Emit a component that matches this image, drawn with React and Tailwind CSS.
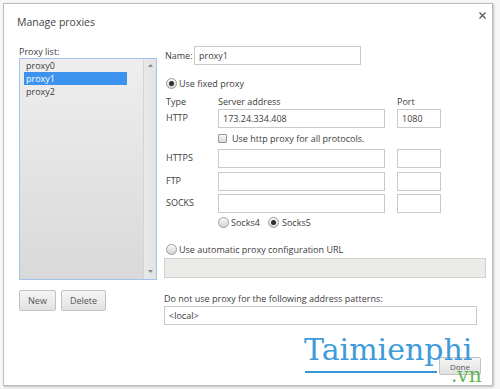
import React from "react";

function Radio({ checked }) {
  return (
    <span className="w-[11px] h-[11px] rounded-full border border-[#9c9c9c] bg-[linear-gradient(to_bottom,#fafafa,#d4d4d4)] flex items-center justify-center shrink-0">
      {checked && <span className="w-[5px] h-[5px] rounded-full bg-[#2e2e2e]" />}
    </span>
  );
}

function Input({ className = "", children, disabled }) {
  return (
    <div
      className={
        "border flex items-center pl-[4px] shrink-0 " +
        (disabled ? "bg-[#ebebe7] border-[#d2d2d2] " : "bg-white border-[#c9c9c9] ") +
        className
      }
    >
      {children}
    </div>
  );
}

function Btn({ className = "", children }) {
  return (
    <div
      className={
        "flex items-center justify-center border border-[#c2c2c2] rounded-[2px] bg-[linear-gradient(to_bottom,#f5f5f5,#e2e2e2)] text-[#555] " +
        className
      }
    >
      {children}
    </div>
  );
}

function Row({ label, children, mt }) {
  return (
    <div className={"flex items-center h-[19px] " + mt}>
      <div className="w-[54px] pl-[2px] mb-[3px]">{label}</div>
      {children}
    </div>
  );
}

export default function App() {
  return (
    <div className="w-[500px] h-[389px] bg-[#f6f6f6] pt-[3px] pl-[3px] font-['Open_Sans',sans-serif] text-[9px] leading-[13px] text-[#3d3d3d]">
      <div className="relative w-[490px] h-[383px] bg-white border border-[#bcbcbc] shadow-[1px_1px_2px_rgba(0,0,0,0.22)] flex flex-col">
        {/* header */}
        <div className="h-[37px] flex justify-between shrink-0">
          <div className="pl-[13px] pt-[11px] text-[10.5px] leading-[14px] text-[#444]">
            Manage proxies
          </div>
          <div className="pt-[8px] pr-[6px]">
            <svg width="7" height="7" viewBox="0 0 7 7">
              <path d="M0.5 0.5 L6.5 6.5 M6.5 0.5 L0.5 6.5" stroke="#5a5a5a" strokeWidth="1.4" />
            </svg>
          </div>
        </div>

        {/* body */}
        <div className="flex pl-[15px]">
          {/* left column */}
          <div className="w-[138px] shrink-0">
            <div className="mt-[4px] h-[13px] leading-[13px]">Proxy list:</div>
            <div className="h-[222px] border border-[#a3c4e8] bg-[linear-gradient(to_bottom,#eeeeee,#d9d9d9)] flex">
              <div className="flex-1 pl-[4px]">
                <div className="h-[13px] pl-[2px]">proxy0</div>
                <div className="h-[13px] pl-[2px] w-[103px] bg-[#3b93ee] text-white">proxy1</div>
                <div className="h-[13px] pl-[2px]">proxy2</div>
              </div>
              <div className="w-[13px] border-l border-[#d4d4d4] bg-[linear-gradient(to_right,#e9e9e9,#e2e2e2)] flex flex-col items-center justify-between pt-[5px] pb-[6px]">
                <svg width="5" height="3" viewBox="0 0 5 3">
                  <path d="M0 3 L2.5 0 L5 3 Z" fill="#8a8a8a" />
                </svg>
                <svg width="5" height="3" viewBox="0 0 5 3">
                  <path d="M0 0 L2.5 3 L5 0 Z" fill="#8a8a8a" />
                </svg>
              </div>
            </div>
            <div className="mt-[10px] flex gap-[5px]">
              <Btn className="w-[37px] h-[21px]">New</Btn>
              <Btn className="w-[45px] h-[21px]">Delete</Btn>
            </div>
          </div>

          {/* right column */}
          <div className="ml-[7px] w-[323px]">
            <div className="mt-[5px] h-[19px] flex items-center">
              <div className="w-[30px] pl-[1px]">Name:</div>
              <Input className="w-[167px] h-full">proxy1</Input>
            </div>

            <div className="mt-[11px] h-[14px] flex items-center pl-[2px] gap-[2px]">
              <Radio checked />
              <span>Use fixed proxy</span>
            </div>

            <div className="mt-[4px] h-[14px] flex items-center">
              <div className="w-[54px] pl-[2px]">Type</div>
              <div className="w-[179px]">Server address</div>
              <div>Port</div>
            </div>

            <Row label="HTTP" mt="mt-[1px]">
              <Input className="w-[167px] h-full">173.24.334.408</Input>
              <Input className="w-[44px] h-full ml-[12px]">1080</Input>
            </Row>

            <div className="mt-[3px] h-[14px] flex items-center pl-[54px]">
              <span className="w-[9px] h-[9px] border border-[#979797] rounded-[1px] bg-[linear-gradient(to_bottom,#f7f7f7,#dadada)] shrink-0" />
              <span className="ml-[5px]">Use http proxy for all protocols.</span>
            </div>

            <Row label="HTTPS" mt="mt-[4px]">
              <Input className="w-[167px] h-full" />
              <Input className="w-[44px] h-full ml-[12px]" />
            </Row>
            <Row label="FTP" mt="mt-[4px]">
              <Input className="w-[167px] h-full" />
              <Input className="w-[44px] h-full ml-[12px]" />
            </Row>
            <Row label="SOCKS" mt="mt-[3px]">
              <Input className="w-[167px] h-full" />
              <Input className="w-[44px] h-full ml-[12px]" />
            </Row>

            <div className="mt-[2px] h-[14px] flex items-center pl-[54px]">
              <Radio />
              <span className="ml-[2px] w-[37px]">Socks4</span>
              <Radio checked />
              <span className="ml-[3px]">Socks5</span>
            </div>

            <div className="mt-[13px] h-[14px] flex items-center pl-[2px] gap-[2px]">
              <Radio />
              <span>Use automatic proxy configuration URL</span>
            </div>

            <Input disabled className="mt-[2px] w-[322px] h-[20px]" />

            <div className="mt-[13px] h-[14px] flex items-center">
              Do not use proxy for the following address patterns:
            </div>
            <Input className="mt-[1px] w-[313px] h-[19px]">&lt;local&gt;</Input>
          </div>
        </div>

        {/* footer */}
        <div className="mt-auto flex justify-end pr-[11px] pb-[10px]">
          <Btn className="w-[42px] h-[18px] text-[8px]">Done</Btn>
        </div>

        {/* watermark logo overlay */}
        <div className="absolute left-[300px] top-[331px] font-['DejaVu_Serif',serif] text-[30px] leading-[30px] text-[#3596d8] opacity-95">
          Taimienphi
        </div>
        <div className="absolute left-[301px] top-[367px] w-[132px] h-[1.5px] bg-[#3596d8]" />
        <div className="absolute left-[447px] top-[361px] font-['DejaVu_Serif',serif] text-[20px] leading-[20px] text-[#62b34f]">
          .vn
        </div>
      </div>
    </div>
  );
}
